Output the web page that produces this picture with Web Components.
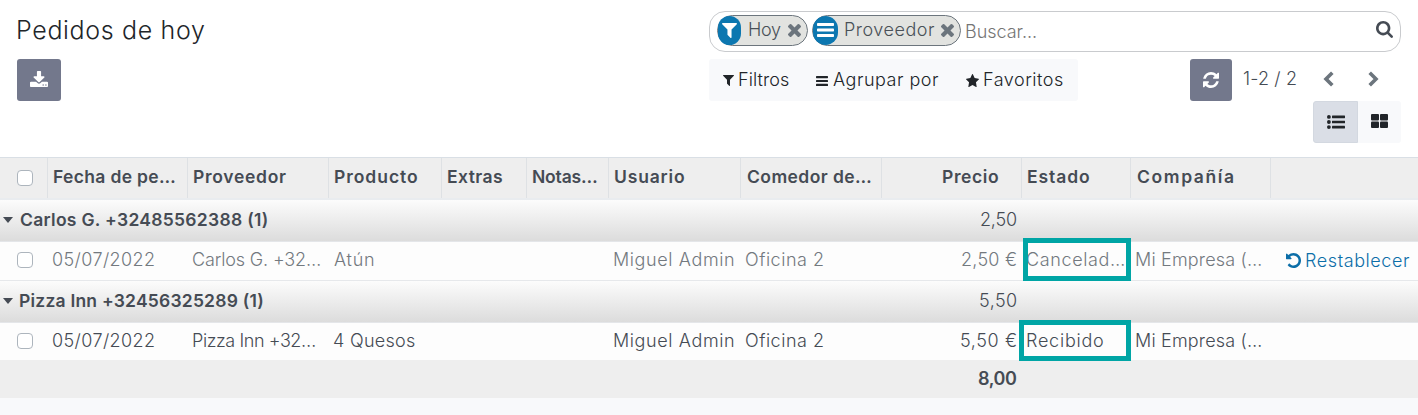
<!DOCTYPE html>
<html lang="es">
<head>
<meta charset="utf-8">
<title>Pedidos de hoy</title>
<style>
body { margin: 0; background: #f8f9fb; font-family: Inter, "Open Sans", sans-serif; font-size: 18px; font-weight: 300; color: #454b54; overflow: hidden; }
</style>
</head>
<body>
<lunch-app></lunch-app>
<script>
const define = (name, html, setup) => {
  const tpl = document.createElement('template');
  tpl.innerHTML = html;
  customElements.define(name, class extends HTMLElement {
    connectedCallback() {
      if (this.shadowRoot) return;
      this.attachShadow({ mode: 'open' }).append(tpl.content.cloneNode(true));
      if (setup) setup(this, this.shadowRoot);
    }
  });
};

/* Icons: [viewBox, markup] */
const ICONS = {
  filter: ['192 256 1408 1408', '<path d="M1595 295q17 41-14 70l-493 493v742q0 42-39 59-13 5-25 5-27 0-45-19l-256-256q-19-19-19-45v-486l-493-493q-31-29-14-70 17-39 59-39h1280q42 0 59 39z"/>'],
  times: ['302 366 1188 1188', '<path d="M1490 1322q0 40-28 68l-136 136q-28 28-68 28t-68-28l-294-294-294 294q-28 28-68 28t-68-28l-136-136q-28-28-28-68t28-68l294-294-294-294q-28-28-28-68t28-68l136-136q28-28 68-28t68 28l294 294 294-294q28-28 68-28t68 28l136 136q28 28 28 68t-28 68l-294 294 294 294q28 28 28 68z"/>'],
  search: ['64 128 1664 1664', '<path d="M1216 832q0-185-131.5-316.5t-316.5-131.5-316.5 131.5-131.5 316.5 131.5 316.5 316.5 131.5 316.5-131.5 131.5-316.5zm512 832q0 52-38 90t-90 38q-54 0-90-38l-343-342q-179 124-399 124-143 0-273.5-55.5t-225-150-150-225-55.5-273.5 55.5-273.5 150-225 225-150 273.5-55.5 273.5 55.5 225 150 150 225 55.5 273.5q0 220-124 399l343 343q37 37 37 90z"/>'],
  star: ['64 32 1664 1587', '<path d="M1728 647q0 22-26 48l-363 354 86 500q1 7 1 20 0 21-10.5 35.5t-30.5 14.5q-19 0-40-12l-449-236-449 236q-22 12-40 12-21 0-31.5-14.5t-10.5-35.5q0-6 2-20l86-500-364-354q-25-27-25-48 0-37 56-46l502-73 225-455q19-41 49-41t49 41l225 455 502 73q56 9 56 46z"/>'],
  download: ['64 0 1664 1536', '<path d="M1344 1344q0-26-19-45t-45-19-45 19-19 45 19 45 45 19 45-19 19-45zm256 0q0-26-19-45t-45-19-45 19-19 45 19 45 45 19 45-19 19-45zm128-224v320q0 40-28 68t-68 28h-1472q-40 0-68-28t-28-68v-320q0-40 28-68t68-28h465l135 136q58 56 136 56t136-56l136-136h464q40 0 68 28t28 68zm-325-569q17 41-14 70l-448 448q-18 19-45 19t-45-19l-448-448q-31-29-14-70 17-39 59-39h256v-448q0-26 19-45t45-19h256q26 0 45 19t19 45v448h256q42 0 59 39z"/>'],
  refresh: ['128 128 1536 1536', '<path d="M1639 1056q0 5-1 7-64 268-268 434.5t-478 166.5q-146 0-282.5-55t-243.5-157l-129 129q-19 19-45 19t-45-19-19-45v-448q0-26 19-45t45-19h448q26 0 45 19t19 45-19 45l-137 137q71 66 161 102t187 36q134 0 250-65t186-179q11-17 53-117 8-23 30-23h192q13 0 22.5 9.5t9.5 22.5zm25-800v448q0 26-19 45t-45 19h-448q-26 0-45-19t-19-45 19-45l138-138q-148-137-349-137-134 0-250 65t-186 179q-11 17-53 117-8 23-30 23h-199q-13 0-22.5-9.5t-9.5-22.5v-7q65-268 270-434.5t480-166.5q146 0 284 55.5t245 156.5l130-129q19-19 45-19t45 19 19 45z"/>'],
  undo: ['128 128 1536 1536', '<path d="M1664 896q0 156-61 298t-164 245-245 164-298 61q-172 0-327-72.5t-264-204.5q-7-10-6.5-22.5t8.5-20.5l137-138q10-9 25-9 16 2 23 12 73 95 179 147t225 52q104 0 198.5-40.5t163.5-109.5 109.5-163.5 40.5-198.5-40.5-198.5-109.5-163.5-163.5-109.5-198.5-40.5q-98 0-188 35.5t-160 101.5l137 138q31 30 14 69-17 40-59 40h-448q-26 0-45-19t-19-45v-448q0-42 40-59 39-17 69 14l130 129q107-101 244.5-156.5t284.5-55.5q156 0 298 61t245 164 164 245 61 298z"/>'],
  bars: ['0 0 18 14', '<rect width="18" height="3" rx=".8"/><rect y="5.5" width="18" height="3" rx=".8"/><rect y="11" width="18" height="3" rx=".8"/>'],
  prev: ['0 0 11 16', '<path d="M9.3 1.7 3 8l6.3 6.3" fill="none" stroke="currentColor" stroke-width="3.6"/>'],
  next: ['0 0 11 16', '<path d="M1.7 1.7 8 8l-6.3 6.3" fill="none" stroke="currentColor" stroke-width="3.6"/>'],
  list: ['0 0 18 14', '<circle cx="1.9" cy="1.9" r="1.9"/><circle cx="1.9" cy="7" r="1.9"/><circle cx="1.9" cy="12.1" r="1.9"/><rect x="5" y=".6" width="13" height="2.6" rx=".4"/><rect x="5" y="5.7" width="13" height="2.6" rx=".4"/><rect x="5" y="10.8" width="13" height="2.6" rx=".4"/>'],
  tiles: ['0 0 17 14', '<rect width="8" height="6.4" rx="1"/><rect x="9" width="8" height="6.4" rx="1"/><rect y="7.6" width="8" height="6.4" rx="1"/><rect x="9" y="7.6" width="8" height="6.4" rx="1"/>'],
  caret: ['0 0 10 6', '<path d="M0 0h10L5 6z"/>']
};
define('ui-icon', `<style>:host{display:block;flex:none}svg{display:block;width:100%;height:100%;fill:currentColor}</style><svg preserveAspectRatio="none"></svg>`, (el, root) => {
  const [box, body] = ICONS[el.getAttribute('name')];
  const svg = root.querySelector('svg');
  svg.setAttribute('viewBox', box);
  svg.innerHTML = body;
});

/* Label tracked so that its glyphs span exactly the width given in "w". */
const pen = document.createElement('canvas').getContext('2d');
define('ui-label', `<style>:host{display:block;flex:none;line-height:24px;white-space:nowrap}span{display:block}</style><span><slot></slot></span>`, (el, root) => {
  const cs = getComputedStyle(el), text = el.textContent, w = +el.getAttribute('w');
  pen.font = `${cs.fontWeight} ${cs.fontSize} ${cs.fontFamily}`;
  const m = pen.measureText(text);
  const ink = m.actualBoundingBoxLeft + m.actualBoundingBoxRight;
  const gap = (w - ink) / (text.length - 1);
  const span = root.querySelector('span');
  el.style.width = w + 'px';
  span.style.letterSpacing = gap + 'px';
  span.style.marginLeft = m.actualBoundingBoxLeft + 'px';
});

define('ui-button', `<style>
:host{display:flex;align-items:center;justify-content:center;flex:none;box-sizing:border-box;width:42px;height:42px;border-radius:3px;background:#73788c;color:#fff}
</style><slot></slot>`);

define('search-facet', `<style>
:host{display:flex;align-items:center;flex:none;box-sizing:border-box;height:31px;border:1px solid #6c757d;border-radius:16px;background:#e2e3e0;color:#495057;padding-right:6px}
.badge{display:flex;align-items:center;justify-content:center;height:29px;width:var(--badge,23px);background:#0c77b0;color:#fff;border-radius:13px;margin-right:8px}
.x{width:13px;height:13px;margin-left:7px;color:#6c757d}
</style><div class="badge"><slot name="icon"></slot></div><slot></slot><ui-icon class="x" name="times"></ui-icon>`);

define('search-box', `<style>
:host{display:flex;align-items:center;box-sizing:border-box;height:41px;border:1px solid #c9cbce;border-radius:16px;padding:0 7px;background:#fff}
search-facet{margin:-3px 4px 0 0}
.ph{color:#757575;margin:1px 0 0 1px}
.find{width:17px;height:17px;margin:-4px 0 0 auto;color:#454b54}
</style>
<search-facet><ui-icon slot="icon" name="filter" style="width:15px;height:15px"></ui-icon><ui-label w="32">Hoy</ui-label></search-facet>
<search-facet style="--badge:25px"><ui-icon slot="icon" name="bars" style="width:17px;height:14px"></ui-icon><ui-label w="90" style="margin:0 -1px">Proveedor</ui-label></search-facet>
<ui-label class="ph" w="70">Buscar...</ui-label>
<ui-icon class="find" name="search"></ui-icon>`);

define('filter-menu', `<style>
:host{display:flex;align-items:center;box-sizing:border-box;width:369px;height:42px;padding:0 14px;background:#f8f9fb;border-radius:3px;color:#212529}
ui-icon{margin-right:5px;margin-top:1px}
.g{margin-right:27px}
</style>
<ui-icon name="filter" style="width:11px;height:11px"></ui-icon><ui-label class="g" w="50">Filtros</ui-label>
<ui-icon name="bars" style="width:12px;height:10px"></ui-icon><ui-label class="g" w="106">Agrupar por</ui-label>
<ui-icon name="star" style="width:13px;height:13px;margin-top:0;margin-right:5px"></ui-icon><ui-label w="79">Favoritos</ui-label>`);

define('record-pager', `<style>
:host{display:flex;align-items:center;height:42px;color:#6c757d}
ui-label{margin:-2px 27px 0 11px;color:#454b54}
ui-icon{width:11px;height:16px;margin-right:34px;margin-top:-2px}
ui-icon:last-child{margin-right:22px}
</style><ui-button><ui-icon name="refresh" style="width:16px;height:16px;margin:0"></ui-icon></ui-button><ui-label w="53">1-2 / 2</ui-label><ui-icon name="prev"></ui-icon><ui-icon name="next"></ui-icon>`);

define('view-switch', `<style>
:host{display:flex;justify-content:flex-end;color:#212529}
ui-button{color:inherit;background:#f8f9fb;width:43px;border-radius:0 3px 3px 0}
.on{width:45px;background:#dadee6;border:1px solid #d3d8e0;border-radius:3px 0 0 3px}
</style><ui-button class="on"><ui-icon name="list" style="width:18px;height:14px"></ui-icon></ui-button><ui-button><ui-icon name="tiles" style="width:17px;height:14px;margin-top:-2px"></ui-icon></ui-button>`);

define('control-panel', `<style>
:host{display:grid;grid-template-columns:692px 692px;box-sizing:border-box;height:157px;padding:11px 17px 0;background:#fff}
.title{font-size:25px;color:#212529;margin:7px 0 17px 1px}
.row{display:flex;justify-content:space-between;margin-top:7px}
</style>
<div><ui-label class="title" w="187">Pedidos de hoy</ui-label><ui-button style="width:44px"><ui-icon name="download" style="width:18px;height:16px;margin-top:-3px"></ui-icon></ui-button></div>
<div><search-box></search-box><div class="row"><filter-menu></filter-menu><record-pager></record-pager></div><view-switch></view-switch></div>`);

define('list-row', `<style>
:host{display:grid;grid-template-columns:48px 140px 141px 113px 85px 82px 132px 141px 140px 109px 140px 147px;align-items:center;box-sizing:border-box;height:39px;background:#fdfdfd;border-bottom:1px solid #e6e8eb;padding-bottom:2px}
:host([kind=head]){height:43px;background:#eee;border-top:1px solid #d9dfe5;border-bottom:2px solid #e9ecef;font-weight:600;align-items:stretch;padding:0;font-size:17.5px}
:host([kind=group]){height:42px;background:linear-gradient(#fcfcfc,#dcdcdc);border-bottom-color:#e4e6e9}
:host([kind=foot]){height:38px;background:#eee;border:0;font-weight:600;padding:0}
:host([muted]){color:#73797f}
</style><slot></slot>`);

define('list-cell', `<style>
:host{display:flex;align-items:center;min-width:0;box-sizing:border-box;padding:0 5px}
:host([head]){border-right:1px solid #dee1e4;padding:0 0 3px 6px}
:host([head]:last-child){border:0}
:host([num]){justify-content:flex-end;padding-right:6px}
:host([head][num]){padding-right:23px}
</style><slot></slot>`);

define('check-box', `<style>:host{display:block;box-sizing:border-box;width:16px;height:16px;margin-left:12px;border:1px solid #adb5bd;border-radius:4px;background:#fff}</style>`);

define('state-frame', `<style>:host{position:absolute;box-sizing:border-box;border:5px solid #00a5a5}</style>`);

define('order-list', `<style>
:host{display:block;position:relative}
.group{grid-column:1/9;display:flex;align-items:center;padding-left:3px;font-weight:600;font-size:17.5px}
.group ui-icon{width:10px;height:6px;margin-right:7px}
.sum{grid-column:9;margin-right:0}
.link{color:#0c6ea8;padding:1px 0 0 15px}
</style>
<list-row kind="head">
<list-cell head><check-box style="margin:3px 0 0 11px"></check-box></list-cell>
<list-cell head><ui-label w="121">Fecha de pe…</ui-label></list-cell>
<list-cell head><ui-label w="92">Proveedor</ui-label></list-cell>
<list-cell head><ui-label w="82">Producto</ui-label></list-cell>
<list-cell head><ui-label w="54">Extras</ui-label></list-cell>
<list-cell head><ui-label w="64">Notas…</ui-label></list-cell>
<list-cell head><ui-label w="69">Usuario</ui-label></list-cell>
<list-cell head><ui-label w="124">Comedor de…</ui-label></list-cell>
<list-cell head num><ui-label w="55">Precio</ui-label></list-cell>
<list-cell head><ui-label w="61">Estado</ui-label></list-cell>
<list-cell head><ui-label w="96">Compañía</ui-label></list-cell>
<list-cell head></list-cell>
</list-row>
<list-row kind="group">
<div class="group"><ui-icon name="caret"></ui-icon><ui-label w="247">Carlos G. +32485562388 (1)</ui-label></div>
<list-cell num class="sum"><ui-label w="35">2,50</ui-label></list-cell>
</list-row>
<list-row muted>
<list-cell><check-box></check-box></list-cell>
<list-cell><ui-label w="101">05/07/2022</ui-label></list-cell>
<list-cell><ui-label w="127">Carlos G. +32…</ui-label></list-cell>
<list-cell><ui-label w="40">Atún</ui-label></list-cell>
<list-cell></list-cell><list-cell></list-cell>
<list-cell><ui-label w="120">Miguel Admin</ui-label></list-cell>
<list-cell><ui-label w="77">Oficina 2</ui-label></list-cell>
<list-cell num><ui-label w="54">2,50 €</ui-label></list-cell>
<list-cell><ui-label w="97">Cancelad…</ui-label></list-cell>
<list-cell><ui-label w="125">Mi Empresa (…</ui-label></list-cell>
<list-cell class="link"><ui-icon name="undo" style="width:15px;height:15px;margin-right:5px"></ui-icon><ui-label w="104">Restablecer</ui-label></list-cell>
</list-row>
<list-row kind="group">
<div class="group"><ui-icon name="caret"></ui-icon><ui-label w="242">Pizza Inn +32456325289 (1)</ui-label></div>
<list-cell num class="sum"><ui-label w="36">5,50</ui-label></list-cell>
</list-row>
<list-row style="height:37px;border:0">
<list-cell><check-box></check-box></list-cell>
<list-cell><ui-label w="101">05/07/2022</ui-label></list-cell>
<list-cell><ui-label w="122">Pizza Inn +32…</ui-label></list-cell>
<list-cell><ui-label w="81">4 Quesos</ui-label></list-cell>
<list-cell></list-cell><list-cell></list-cell>
<list-cell><ui-label w="120">Miguel Admin</ui-label></list-cell>
<list-cell><ui-label w="77">Oficina 2</ui-label></list-cell>
<list-cell num><ui-label w="55">5,50 €</ui-label></list-cell>
<list-cell><ui-label w="76">Recibido</ui-label></list-cell>
<list-cell><ui-label w="125">Mi Empresa (…</ui-label></list-cell>
<list-cell></list-cell>
</list-row>
<list-row kind="foot"><list-cell num class="sum"><ui-label w="38">8,00</ui-label></list-cell></list-row>
<state-frame style="left:1023px;top:81px;width:108px;height:43px"></state-frame>
<state-frame style="left:1019px;top:163px;width:112px;height:41px"></state-frame>`);

define('lunch-app', `<style>:host{display:block;width:1418px;height:415px}</style><control-panel></control-panel><order-list></order-list>`);
</script>
</body>
</html>
